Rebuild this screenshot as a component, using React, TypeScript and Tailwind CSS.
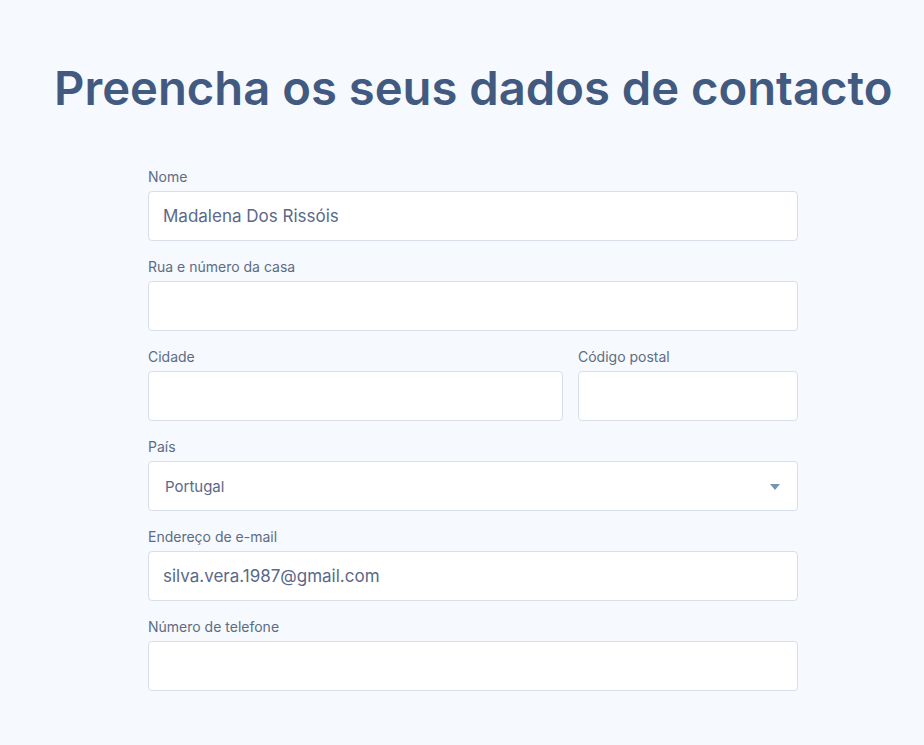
const font = { fontFamily: "Inter, 'Noto Sans', sans-serif" };

const Field = ({ label, value, className = "" }: { label: string; value?: string; className?: string }) => (
  <div className={`flex flex-col ${className}`}>
    <label className="text-[14px] leading-[16px] text-[#5d6c82] mb-[6px]">{label}</label>
    <div className="h-[50px] bg-white border border-[#d8dee8] rounded-[4px] flex items-center px-[14px] pt-[2px] text-[17px] text-[#5a6988]">
      {value}
    </div>
  </div>
);

export default function App() {
  return (
    <main className="min-h-screen bg-[#f6f9fe]" style={font}>
      <h1 className="pt-[58px] pl-[54px] text-[47.2px] leading-[60px] font-semibold text-[#435a80] whitespace-nowrap">
        Preencha os seus dados de contacto
      </h1>

      <section className="ml-[148px] w-[650px] mt-[51px] flex flex-col gap-[18px]">
        <Field label="Nome" value="Madalena Dos Rissóis" />
        <Field label="Rua e número da casa" />
        <div className="flex gap-[15px]">
          <Field label="Cidade" className="w-[415px]" />
          <Field label="Código postal" className="flex-1" />
        </div>
        <div className="flex flex-col">
          <label className="text-[14px] leading-[16px] text-[#5d6c82] mb-[6px]">País</label>
          <div className="h-[50px] bg-white border border-[#d8dee8] rounded-[4px] flex items-center justify-between pl-[16px] pr-[17px] pt-[2px] text-[15px] text-[#5a6988]">
            Portugal
            <svg width="10" height="6" viewBox="0 0 10 6">
              <path d="M0 0 H10 L5 6 Z" fill="#7a93ae" />
            </svg>
          </div>
        </div>
        <Field label="Endereço de e-mail" value="silva.vera.1987@gmail.com" />
        <Field label="Número de telefone" />
      </section>
    </main>
  );
}
